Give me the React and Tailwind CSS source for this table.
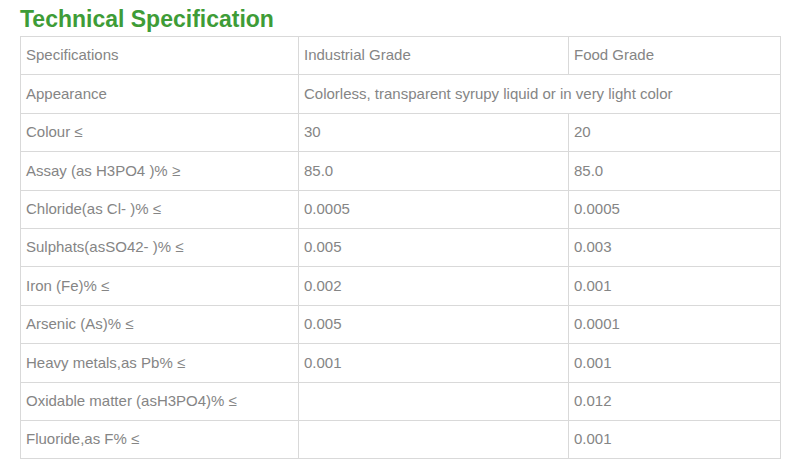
const rows = [
  ["Specifications", "Industrial Grade", "Food Grade"],
  ["Appearance", "Colorless, transparent syrupy liquid or in very light color"],
  ["Colour ≤", "30", "20"],
  ["Assay (as H3PO4 )% ≥", "85.0", "85.0"],
  ["Chloride(as Cl- )% ≤", "0.0005", "0.0005"],
  ["Sulphats(asSO42- )% ≤", "0.005", "0.003"],
  ["Iron (Fe)% ≤", "0.002", "0.001"],
  ["Arsenic (As)% ≤", "0.005", "0.0001"],
  ["Heavy metals,as Pb% ≤", "0.001", "0.001"],
  ["Oxidable matter (asH3PO4)% ≤", "", "0.012"],
  ["Fluoride,as F% ≤", "", "0.001"],
];

export default function App() {
  return (
    <div className="w-[800px] h-[476px] bg-white font-['Liberation_Sans',Arial,sans-serif] pl-5 pt-[5px]">
      <h2 className="text-[23px] leading-[28px] font-bold text-[#3e9c37] mb-[3px]">
        Technical Specification
      </h2>
      <table className="border-collapse text-[15px] text-[#858585] table-fixed w-[760px]">
        <colgroup>
          <col className="w-[278px]" />
          <col className="w-[270px]" />
          <col className="w-[212px]" />
        </colgroup>
        <tbody>
          {rows.map((r, i) => (
            <tr key={i} className="h-[38.4px]">
              <td className="border border-[#d9d9d9] px-[5px] align-middle">{r[0]}</td>
              {r.length === 2 ? (
                <td colSpan={2} className="border border-[#d9d9d9] px-[5px] align-middle">
                  {r[1]}
                </td>
              ) : (
                <>
                  <td className="border border-[#d9d9d9] px-[5px] align-middle">{r[1]}</td>
                  <td className="border border-[#d9d9d9] px-[5px] align-middle">{r[2]}</td>
                </>
              )}
            </tr>
          ))}
        </tbody>
      </table>
    </div>
  );
}
